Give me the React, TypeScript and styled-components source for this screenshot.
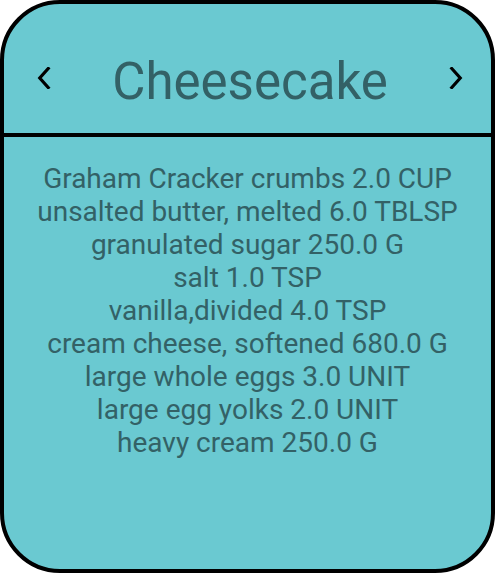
import styled, { createGlobalStyle } from "styled-components";

const ingredients = [
  "Graham Cracker crumbs 2.0 CUP",
  "unsalted butter, melted 6.0 TBLSP",
  "granulated sugar 250.0 G",
  "salt 1.0 TSP",
  "vanilla,divided 4.0 TSP",
  "cream cheese, softened 680.0 G",
  "large whole eggs 3.0 UNIT",
  "large egg yolks 2.0 UNIT",
  "heavy cream 250.0 G",
];

const GlobalStyle = createGlobalStyle`
  html, body {
    margin: 0;
    padding: 0;
    background: #ffffff;
  }
  body {
    font-family: Roboto, "Liberation Sans", sans-serif;
  }
`;

function Chevron(props: { dir: "left" | "right" }) {
  const d = props.dir === "left" ? "M11 1.5 L2.5 11 L11 20.5" : "M2.5 1.5 L11 11 L2.5 20.5";
  return (
    <svg width="14" height="22" viewBox="0 0 13.5 22">
      <path d={d} fill="none" stroke="#000" strokeWidth="3.2" strokeLinecap="square" />
    </svg>
  );
}

export default function App() {
  return (
    <>
      <GlobalStyle />
      <Card>
        <Header>
          <NavButton>
            <Chevron dir="left" />
          </NavButton>
          <Title>Cheesecake</Title>
          <NavButton>
            <Chevron dir="right" />
          </NavButton>
        </Header>
        <List>
          {ingredients.map((item) => (
            <Item key={item}>{item}</Item>
          ))}
        </List>
      </Card>
    </>
  );
}

const Card = styled.div`
  box-sizing: border-box;
  width: 495px;
  height: 573px;
  background: #6ac9d1;
  border: 4px solid #000;
  border-radius: 60px;
  display: flex;
  flex-direction: column;
  overflow: hidden;
`;

const Header = styled.div`
  box-sizing: border-box;
  height: 133px;
  flex-shrink: 0;
  display: flex;
  align-items: center;
  justify-content: space-between;
  padding: 18px 28px 0 33px;
  border-bottom: 4px solid #000;
`;

const NavButton = styled.div`
  width: 14px;
  display: flex;
  justify-content: center;
`;

const Title = styled.h1`
  margin: 0;
  padding-top: 8px;
  font-size: 51px;
  font-weight: 400;
  color: #336166;
`;

const List = styled.div`
  padding-top: 25px;
  display: flex;
  flex-direction: column;
  align-items: center;
`;

const Item = styled.div`
  font-size: 28px;
  line-height: 33px;
  color: #336166;
  text-align: center;
  white-space: nowrap;
`;
